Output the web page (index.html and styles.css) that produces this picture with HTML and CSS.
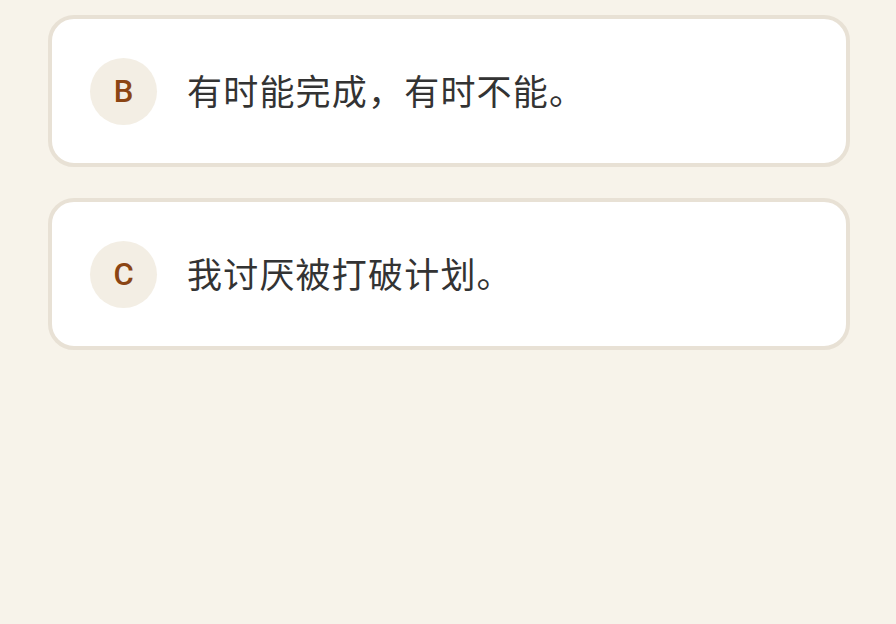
FILE: index.html
```html
<!DOCTYPE html>
<html lang="zh">
<head>
<meta charset="utf-8">
<link rel="stylesheet" href="styles.css">
</head>
<body>
<div class="list">
  <div class="card">
    <div class="badge">B</div>
    <div class="text">有时能完成，有时不能。</div>
  </div>
  <div class="card">
    <div class="badge">C</div>
    <div class="text">我讨厌被打破计划。</div>
  </div>
</div>
</body>
</html>
```

FILE: styles.css
```css
html, body {
  margin: 0;
  padding: 0;
  height: 100%;
}
body {
  background: #f7f3ea;
  font-family: "Noto Sans CJK SC", "Noto Sans", sans-serif;
}
.list {
  display: flex;
  flex-direction: column;
  gap: 31px;
  padding: 15px 46px 0 48px;
}
.card {
  display: flex;
  align-items: center;
  gap: 30px;
  height: 144px;
  padding: 0 38px;
  background: #ffffff;
  border: 4px solid #e8e1d5;
  border-radius: 26px;
}
.badge {
  width: 67px;
  height: 67px;
  border-radius: 50%;
  background: #f3eee4;
  color: #8b4513;
  font-family: Roboto, "Liberation Sans", sans-serif;
  font-weight: 500;
  font-size: 31px;
  display: flex;
  align-items: center;
  justify-content: center;
  flex-shrink: 0;
}
.text {
  font-size: 35px;
  line-height: 1;
  color: #333333;
  letter-spacing: 1.2px;
  margin-top: -4px;
}
```
